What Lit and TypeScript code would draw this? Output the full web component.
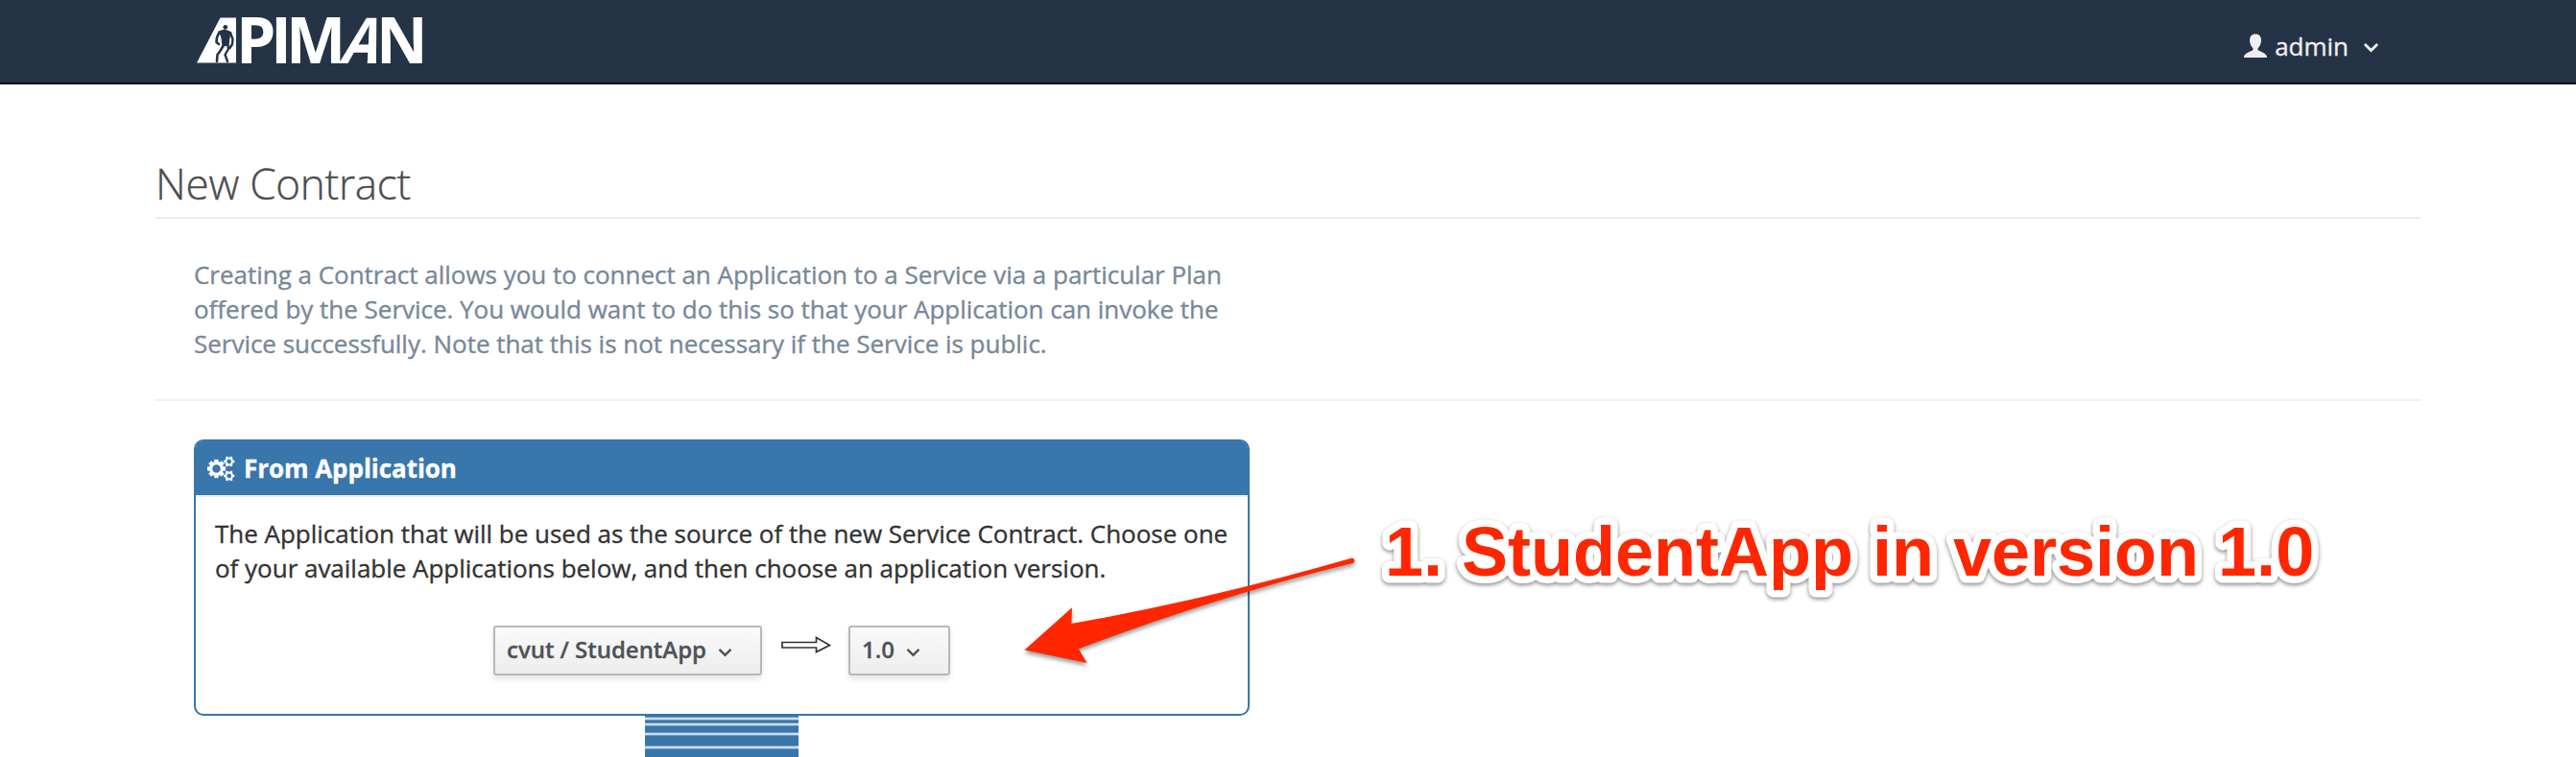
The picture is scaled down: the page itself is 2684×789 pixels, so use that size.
import { LitElement, html, css, svg } from "lit";
import { customElement, property } from "lit/decorators.js";

const chevron = (w: number, h: number, sw: number) => html`<svg class="chev" width=${w} height=${h} viewBox="0 0 15 10">
  <path d="M1.5 1.8 7.5 7.8 13.5 1.8" fill="none" stroke="currentColor" stroke-width=${sw} /></svg>`;

// Toothed wheel built from evenly spaced teeth around a ring
const gear = (cx: number, cy: number, r: number, hole: number, teeth: number, turn = 0) => {
  const step = 360 / teeth;
  const tw = r * 0.45;
  return svg`<g transform="translate(${cx} ${cy}) rotate(${turn})">
    <circle r=${(r * 0.78 + hole) / 2} fill="none" stroke="#fff" stroke-width=${r * 0.78 - hole} />
    ${Array.from({ length: teeth }, (_, i) => svg`<rect x=${-tw / 2} y=${-r} width=${tw} height=${r * 0.35} fill="#fff" transform="rotate(${i * step})" />`)}
  </g>`;
};

@customElement("select-button")
export class SelectButton extends LitElement {
  @property() label = "";
  static styles = css`
    :host { display: block; }
    .btn {
      box-sizing: border-box; width: 100%; height: 52px; margin: 0; padding: 0 12px;
      display: flex; align-items: center; gap: 12px;
      border: 2px solid #b7b7b7; border-radius: 3px;
      background: linear-gradient(#fafafa, #ededed);
      box-shadow: 0 4px 6px rgba(3, 3, 3, 0.1);
      color: #4d5258; font: 600 24px/36px "Open Sans", sans-serif; white-space: nowrap;
      -webkit-text-stroke: 0.3px currentColor;
    }
    .text { margin-top: -3px; letter-spacing: -0.03px; }
    .chev { margin-top: 4px; flex: none; }
  `;
  render() {
    return html`<button class="btn"><span class="text">${this.label}</span>${chevron(15, 10, 2.4)}</button>`;
  }
}

@customElement("app-root")
export class AppRoot extends LitElement {
  static styles = css`
    :host {
      display: block; position: relative; height: 789px; overflow: hidden; background: #fff;
      font: 26px/36px "Open Sans", sans-serif; color: #333; letter-spacing: -0.02px;
      -webkit-text-stroke: 0.35px currentColor;
    }
    .nav {
      box-sizing: border-box; height: 88px; background: #243346; border-bottom: 2px solid #000;
      display: flex; justify-content: space-between; align-items: flex-start; padding: 0 205px 0 200px;
    }
    .logo { overflow: visible; }
    .user { display: flex; align-items: center; color: #eee; padding-top: 30px; line-height: 36px; }
    .user .name { margin-left: 8px; }
    .user .chev { margin: 2px 0 0 15px; }
    .page { padding: 0 162px; }
    .title { margin: 2px 0 0; height: 138px; box-sizing: border-box; padding: 71px 0 0; border-bottom: 2px solid #eee;
      font-weight: 300; font-size: 44px; line-height: 60px; color: #4d4d4d; letter-spacing: -0.25px; }
    .intro { height: 190px; box-sizing: border-box; padding: 40px 40px 0; margin: 0; border-bottom: 2px solid #f1f1f1;
      color: #778899; white-space: nowrap; }
    .panel { box-sizing: border-box; width: 1100px; height: 288px; margin: 40px 0 0 40px; border: 2px solid #3876ac;
      border-radius: 10px; background: #fff; }
    .head { box-sizing: border-box; height: 58px; background: #3876ac; border-bottom: 2px solid #eeecf0; border-radius: 7px 7px 0 0;
      display: flex; align-items: center; padding: 0 12px; gap: 9px; color: #fff; font-weight: 700; letter-spacing: -0.05px; }
    .text { margin: 0; padding: 20px 20px 0; white-space: nowrap; }
    .row { display: flex; margin: 42px 0 0 310px; }
    .app { width: 280px; }
    .ver { width: 106px; }
    .to { margin: 11px 18px 0 20px; flex: none; }
    .pipe { display: block; margin-left: 510px; }
    .arrow { position: absolute; left: 1050px; top: 560px; filter: drop-shadow(0 3px 2px rgba(0, 0, 0, 0.4)); }
    .note { position: absolute; left: 1430px; top: 520px; filter: drop-shadow(0 2px 2px rgba(0, 0, 0, 0.45)); }
    .callout { font: 700 72px "Liberation Sans", sans-serif; fill: #ff2600; stroke: #fff; stroke-width: 15px;
      stroke-linejoin: round; paint-order: stroke; letter-spacing: 0; }
    .brand { font: 700 66px "Open Sans", sans-serif; fill: #fff; letter-spacing: 0; }
  `;

  render() {
    return html`
      <header class="nav">
        <svg class="logo" width="250" height="86" viewBox="200 0 250 86">
          <path d="M205 65.5 229.500 18.500H246V65.500Z" fill="#fff" />
          <g fill="none" stroke="#243346" stroke-linejoin="round" stroke-linecap="round">
            <circle cx="234.8" cy="28.3" r="2.400" fill="#243346" stroke="none" />
            <path d="M229 32.500 234 31 239.500 33 239 40 238 47 232 48 231 40Z" fill="#243346" stroke-width="1" />
            <path d="M228.500 33.500 226 39 225.500 44 228 46" stroke-width="2.600" />
            <path d="M240 34 242.500 41 242 46 239.500 50" stroke-width="2.400" />
            <path d="M233 47 229.500 53 226.500 57 226 64" stroke-width="2.600" />
            <path d="M237.500 47 238 51 234.500 57 236 61 237 64" stroke-width="2.400" />
          </g>
          <g class="brand">
            <text x="246" y="65.5">P</text><text x="282" y="65.500">I</text><text x="298" y="65.500">M</text>
            <text transform="translate(392 65.500) skewX(-17) scale(.85 1)" x="-45.500" y="0">A</text>
            <text x="392" y="65.500">N</text>
          </g>
        </svg>
        <div class="user">
          <svg width="24" height="26" viewBox="0 0 24 26"><path fill="#eee" d="M12 .5c4 0 6 2.700 6 6.500 0 3.500-1.500 6.500-3.500 8.500v1.500c1 1.500 9.500 3 9.500 7.500V25H0v-.5C0 20 8.500 18.500 9.500 17v-1.500C7.500 13.500 6 10.500 6 7 6 3.200 8 .5 12 .5Z"/></svg>
          <span class="name">admin</span>${chevron(17, 11, 2.6)}
        </div>
      </header>
      <main class="page">
        <h1 class="title">New Contract</h1>
        <p class="intro">Creating a Contract allows you to connect an Application to a Service via a particular Plan<br />offered by the Service. You would want to do this so that your Application can invoke the<br />Service successfully. Note that this is not necessary if the Service is public.</p>
        <section class="panel">
          <div class="head">
            <svg width="29" height="28" viewBox="0 0 29 28">${gear(9.5, 14.5, 9.6, 4.3, 8)}${gear(22.700, 7, 5.600, 2.400, 6, 30)}${gear(22.700, 22, 5.600, 2.400, 6, 30)}</svg>
            <span>From Application</span>
          </div>
          <p class="text">The Application that will be used as the source of the new Service Contract. Choose one<br />of your available Applications below, and then choose an application version.</p>
          <div class="row">
            <select-button class="app" label="cvut / StudentApp"></select-button>
            <svg class="to" width="52" height="19" viewBox="0 0 52 19"><path d="M1 6.500H36.500V1.500L50.500 9.500 36.500 16.500V12H1Z" fill="#fff" stroke="#333" stroke-width="1.700" /></svg>
            <select-button class="ver" label="1.0"></select-button>
          </div>
        </section>
        <svg class="pipe" width="160" height="43" viewBox="0 0 160 43">
          <rect width="160" height="43" fill="#3876ac" />
          ${[1, 7, 17, 31].map((y) => svg`<rect y=${y} width="160" height="4" fill="#6e9bc3" /><rect y=${y + 1} width="160" height="2" fill="#cddcea" />`)}
        </svg>
      </main>
      <svg class="arrow" width="370" height="145" viewBox="1050 560 370 145">
        <path fill="#ff2600" d="M1067.500 677.500 1117 633.300 1116.300 650Q1262 624 1408 581.700C1411.500 581 1413 585.500 1409.500 587Q1270 621 1123.700 676.300L1132.700 691Z" />
      </svg>
      <svg class="note" width="1000" height="120" viewBox="1430 520 1000 120"><text class="callout" x="1443" y="600">1. StudentApp in version 1.0</text></svg>
    `;
  }
}
